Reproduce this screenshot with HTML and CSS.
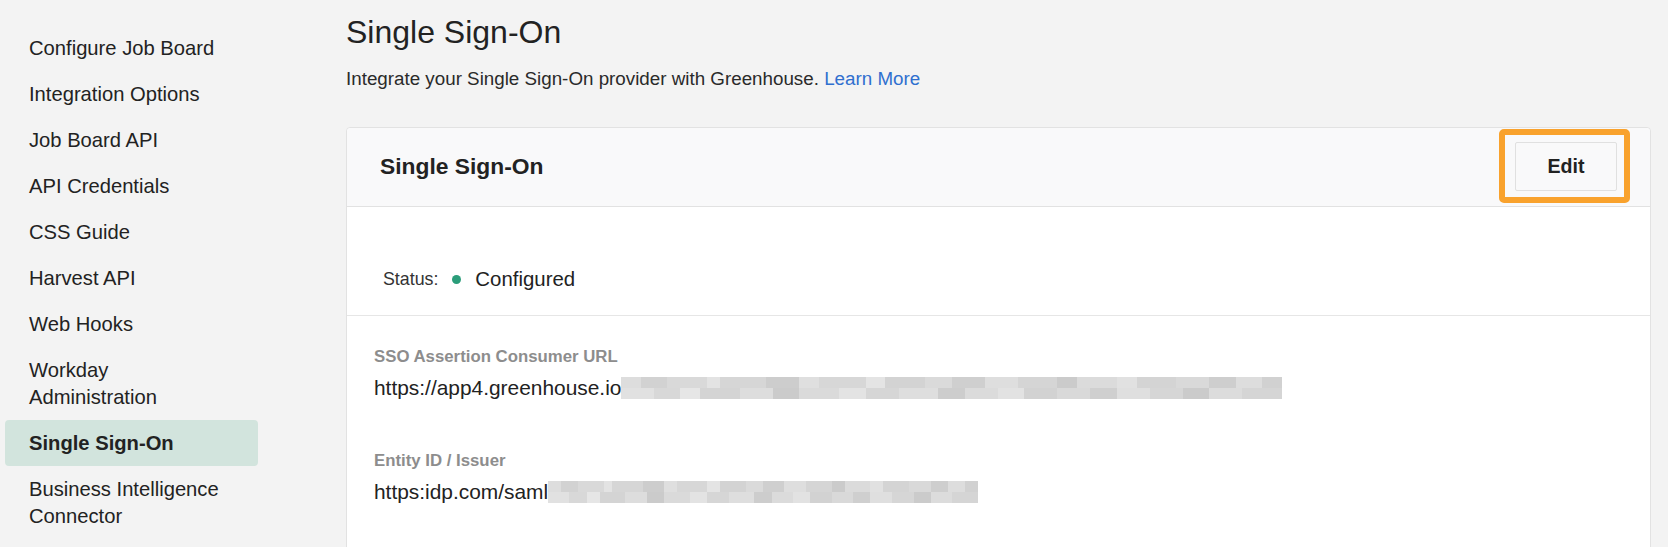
FILE: index.html
```html
<!DOCTYPE html>
<html lang="en">
<head>
<meta charset="utf-8">
<title>Single Sign-On</title>
<link rel="stylesheet" href="styles.css">
</head>
<body>
<div class="page">
  <aside class="sidebar">
    <ul class="nav">
      <li class="nav-item">Configure Job Board</li>
      <li class="nav-item">Integration Options</li>
      <li class="nav-item">Job Board API</li>
      <li class="nav-item">API Credentials</li>
      <li class="nav-item">CSS Guide</li>
      <li class="nav-item">Harvest API</li>
      <li class="nav-item">Web Hooks</li>
      <li class="nav-item">Workday Administration</li>
      <li class="nav-item active">Single Sign-On</li>
      <li class="nav-item">Business Intelligence Connector</li>
    </ul>
  </aside>
  <main class="main">
    <h1 class="page-title">Single Sign-On</h1>
    <p class="intro">Integrate your Single Sign-On provider with Greenhouse. <a class="link" href="#">Learn More</a></p>
    <section class="card">
      <header class="card-header">
        <h2 class="card-title">Single Sign-On</h2>
        <span class="highlight"><button class="btn" type="button">Edit</button></span>
      </header>
      <div class="status-section">
        <div class="status">
          <span class="status-label">Status:</span>
          <span class="dot"></span>
          <span class="status-value">Configured</span>
        </div>
      </div>
      <div class="fields">
        <div class="field">
          <div class="field-label">SSO Assertion Consumer URL</div>
          <div class="field-value">https://app4.greenhouse.io<span class="redacted redacted-long"></span></div>
        </div>
        <div class="field">
          <div class="field-label">Entity ID / Issuer</div>
          <div class="field-value">https:idp.com/saml<span class="redacted redacted-short"></span></div>
        </div>
      </div>
    </section>
  </main>
</div>
</body>
</html>
```
FILE: styles.css
```css
* { box-sizing: border-box; }

body {
  margin: 0;
  background: #f3f3f3;
  font-family: "Liberation Sans", Arial, sans-serif;
  color: #222222;
}

.page {
  display: flex;
  align-items: flex-start;
}

.sidebar {
  flex: none;
  width: 258px;
  padding: 25px 0 0 5px;
}

.nav {
  list-style: none;
  margin: 0;
  padding: 0;
}

.nav-item {
  padding: 9.5px 29px 9.5px 24px;
  font-size: 20.2px;
  line-height: 27px;
  border-radius: 4px;
  color: #222222;
}

.nav-item.active {
  background: #d2e4dd;
  font-weight: bold;
}

.main {
  flex: 1;
  padding: 12px 17px 0 88px;
}

.page-title {
  margin: 0;
  font-size: 32px;
  line-height: 40px;
  font-weight: normal;
  color: #222222;
}

.intro {
  margin: 14px 0 0;
  font-size: 18.8px;
  line-height: 26px;
  color: #2a2a2a;
}

.link {
  color: #2f6fcf;
  text-decoration: none;
}

.card {
  margin-top: 35px;
  background: #ffffff;
  border: 1px solid #e2e2e2;
  border-radius: 4px;
  padding-bottom: 60px;
}

.card-header {
  display: flex;
  align-items: center;
  justify-content: space-between;
  padding: 1px 20px 3px 33px;
  background: #f9f9fa;
  border-bottom: 1px solid #e2e2e2;
  border-radius: 4px 4px 0 0;
}

.card-title {
  margin: 0;
  font-size: 22.8px;
  line-height: 30px;
  font-weight: bold;
  color: #222222;
}

.highlight {
  display: inline-flex;
  padding: 7px 7px 6px 10px;
  border: 6px solid #f9a22d;
  border-radius: 5px;
}

.btn {
  width: 102px;
  height: 49px;
  background: #f9f9fa;
  border: 1px solid #e0e0e0;
  border-radius: 2px;
  font-family: inherit;
  font-size: 19.6px;
  font-weight: bold;
  color: #222222;
  padding: 0;
}

.status-section {
  padding: 58px 0 22px 36px;
  border-bottom: 1px solid #e6e6e6;
}

.status {
  display: flex;
  align-items: center;
  height: 28px;
}

.status-label {
  font-size: 17.8px;
  color: #333333;
}

.dot {
  width: 9px;
  height: 9px;
  border-radius: 50%;
  background: #2b9d7a;
  margin: 0 14px 0 14px;
}

.status-value {
  font-size: 20.4px;
  color: #222222;
}

.fields {
  padding: 29px 27px 0;
}

.field + .field {
  margin-top: 46px;
}

.field-label {
  font-size: 16.8px;
  line-height: 24px;
  font-weight: bold;
  color: #8d8d8d;
}

.field-value {
  display: flex;
  align-items: center;
  margin-top: 4px;
  font-size: 20.9px;
  line-height: 30px;
  color: #222222;
}

.redacted {
  display: inline-block;
  height: 22px;
  background:
    linear-gradient(90deg, #dddddd 0 3%, #d2d2d2 3% 7%, #d9d9d9 7% 13%, #e3e3e3 13% 15%, #d6d6d6 15% 22%, #cdcdcd 22% 27%, #dfdfdf 27% 30%, #d7d7d7 30% 37%, #e4e4e4 37% 40%, #d3d3d3 40% 46%, #dadada 46% 50%, #cfcfcf 50% 55%, #dedede 55% 60%, #d5d5d5 60% 66%, #cbcbcb 66% 69%, #dbdbdb 69% 75%, #e1e1e1 75% 78%, #d4d4d4 78% 84%, #d9d9d9 84% 89%, #cecece 89% 93%, #dddddd 93% 97%, #d1d1d1 97% 100%) top / 100% 50% no-repeat,
    linear-gradient(90deg, #e1e1e1 0 5%, #d8d8d8 5% 9%, #e6e6e6 9% 12%, #d4d4d4 12% 18%, #dddddd 18% 23%, #cbcbcb 23% 27%, #dadada 27% 33%, #e3e3e3 33% 37%, #d6d6d6 37% 42%, #dedede 42% 48%, #cdcdcd 48% 52%, #dbdbdb 52% 57%, #e2e2e2 57% 61%, #d2d2d2 61% 66%, #d9d9d9 66% 71%, #cfcfcf 71% 75%, #dfdfdf 75% 80%, #d6d6d6 80% 85%, #cbcbcb 85% 89%, #dcdcdc 89% 94%, #d5d5d5 94% 100%) bottom / 100% 50% no-repeat;
}

.redacted-long {
  width: 661px;
}

.redacted-short {
  width: 430px;
}
```
